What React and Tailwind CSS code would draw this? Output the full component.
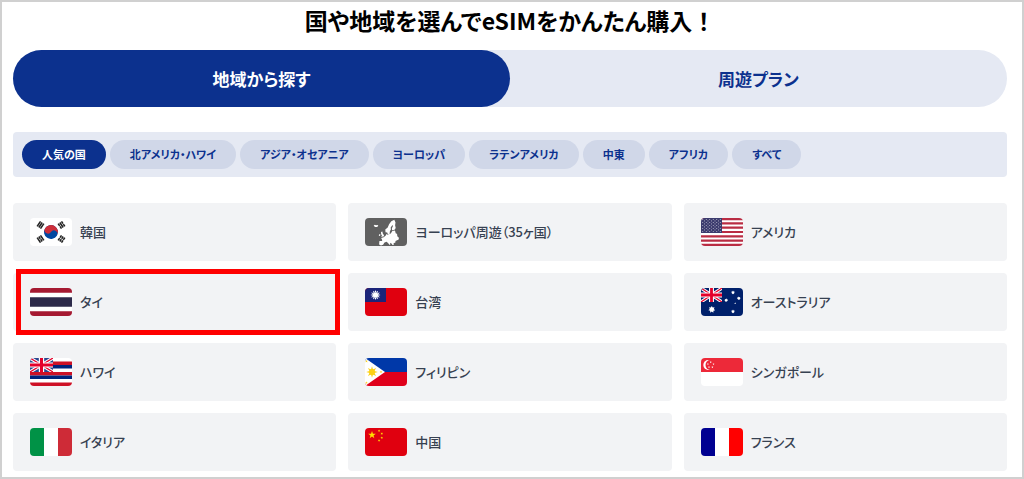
import React, { useState } from "react";

const starPoints = (cx, cy, r, n = 5, inner = 0.4, rot = -90) =>
  Array.from({ length: n * 2 }, (_, i) => {
    const rad = ((rot + (i * 180) / n) * Math.PI) / 180;
    const len = i % 2 ? r * inner : r;
    return `${(cx + len * Math.cos(rad)).toFixed(2)},${(cy + len * Math.sin(rad)).toFixed(2)}`;
  }).join(" ");

const Star = ({ x, y, r, n, inner, rot, fill = "#fff" }) => (
  <polygon points={starPoints(x, y, r, n, inner, rot)} fill={fill} />
);

function Union({ w, h, blue }) {
  return (
    <svg width={w} height={h} viewBox="0 0 60 40" preserveAspectRatio="none">
      <path d="M0 0h60v40H0z" fill={blue} />
      <path d="M0 0l60 40M60 0L0 40" stroke="#fff" strokeWidth="9" />
      <path d="M0 0l60 40M60 0L0 40" stroke="#e4002b" strokeWidth="3.5" />
      <path d="M30 0v40M0 20h60" stroke="#fff" strokeWidth="14" />
      <path d="M30 0v40M0 20h60" stroke="#e4002b" strokeWidth="8" />
    </svg>
  );
}

const Trigram = ({ x, y, a, split }) => (
  <g transform={`translate(${x} ${y}) rotate(${a})`} stroke="#222" strokeWidth="1.6">
    {[-2, 0, 2].map((dy, i) => (
      <path key={dy} d={split[i] ? `M-3 ${dy}h2.7M.3 ${dy}h2.7` : `M-3 ${dy}h6`} />
    ))}
  </g>
);

const flags = {
  kr: (
    <>
      <path d="M0 0h42v28H0z" fill="#fff" />
      <g transform="rotate(33 21 14)">
        <circle cx="21" cy="14" r="7" fill="#0047a0" />
        <path d="M14 14a7 7 0 0 1 14 0a3.5 3.5 0 0 0-7 0a3.5 3.5 0 0 1-7 0z" fill="#cd2e3a" />
      </g>
      <Trigram x={10.5} y={7} a={-56} split={[0, 0, 0]} />
      <Trigram x={31.5} y={7} a={56} split={[1, 0, 1]} />
      <Trigram x={10.5} y={21} a={56} split={[0, 1, 0]} />
      <Trigram x={31.5} y={21} a={-56} split={[1, 1, 1]} />
    </>
  ),
  eu: (
    <>
      <path d="M0 0h42v28H0z" fill="#606060" />
      <g fill="#fff">
        <path d="M8.7 7.4l1.2-.6 1.1.4 1.6-.3.7.9-1.2 1.1-1.8.2-.9-.7z" />
        <path d="M29.3 1.8l-3 1.4-2.2 3-1.4 3.3-2.4 1.9.2 2.8 1.7.3.8 1.9 1.6-.5.3-2.6 1-1.8-.2-2 1.6-2.2.8.4-1.2 2.6.2 1.9 2.5-.5 1.1-1.8-.6-2.6.4-2.8z" />
        <path d="M16 14l1.4-.5.3 1.8 1.4 2.2-.6 1.1-2.5.2 1-1.2-.9-1.3zM14 16.4l1.3-.5-.1 1.9-1.3.3z" />
        <path d="M30 12.5l-2.7.4-1.5 2.6-3.2 1.3-1.2-.8-.6 1.4-2.1 1.9-2.6.6.9 1.5.2 1.6-2.8.1-.3 3.3 1.9 1.2 2.1-.8 1.4-2.4 2.2-.6 2.2 2.2.6 1 .9-.8-.5-1.4 1.6.8 1 1.5 1.2-.2-.1-1.7 1.8-.6.1-1.6 3.2-1.4.2-1.9-1.6-1.4-.2-2.2-1.4-.8z" />
      </g>
    </>
  ),
  us: (
    <>
      <path d="M0 0h42v28H0z" fill="#fff" />
      {[0, 2, 4, 6, 8, 10, 12].map((i) => (
        <path key={i} d={`M0 ${((i + 0.5) * 28) / 13}h42`} stroke="#b92c43" strokeWidth="2.15" />
      ))}
      <path d="M0 0h21v15.1H0z" fill="#3c3b6e" />
      {Array.from({ length: 9 }, (_, r) =>
        Array.from({ length: r % 2 ? 5 : 6 }, (_, c) => (
          <Star key={`${r}-${c}`} x={(r % 2 ? 3.5 : 1.75) + c * 3.5} y={1.5 + r * 1.5} r={0.7} />
        ))
      )}
    </>
  ),
  th: (
    <>
      <path d="M0 0h42v28H0z" fill="#a51931" />
      <path d="M0 4.7h42v18.6H0z" fill="#fff" />
      <path d="M0 9.3h42v9.4H0z" fill="#2d2a4a" />
    </>
  ),
  tw: (
    <>
      <path d="M0 0h42v28H0z" fill="#e0000f" />
      <path d="M0 0h21v14H0z" fill="#1b2479" />
      <Star x={10.5} y={7} r={5} n={12} inner={0.6} />
      <circle cx="10.5" cy="7" r="3.1" fill="#1b2479" opacity=".5" />
      <circle cx="10.5" cy="7" r="2.6" fill="#fff" />
    </>
  ),
  au: (
    <>
      <path d="M0 0h42v28H0z" fill="#00206b" />
      <Union w={21} h={14} blue="#00206b" />
      <Star x={10.8} y={21.5} r={3.5} n={7} inner={0.6} />
      <Star x={32} y={23.5} r={1.9} n={7} inner={0.6} />
      <Star x={25.2} y={12.2} r={1.9} n={7} inner={0.6} />
      <Star x={32} y={4.5} r={1.9} n={7} inner={0.6} />
      <Star x={37.8} y={10.3} r={1.9} n={7} inner={0.6} />
      <Star x={34.2} y={15.3} r={1} />
    </>
  ),
  hi: (
    <>
      <path d="M0 0h42v28H0z" fill="#fff" />
      <path d="M0 3.5h42V7H0zM0 14h42v3.5H0zM0 24.5h42V28H0z" fill="#ce1126" />
      <path d="M0 7h42v3.5H0zM0 17.5h42V21H0z" fill="#00247d" />
      <Union w={23} h={14} blue="#2b478f" />
    </>
  ),
  ph: (
    <>
      <path d="M0 0h42v14H0z" fill="#0038a8" />
      <path d="M0 14h42v14H0z" fill="#e0001b" />
      <path d="M0 0l20 14L0 28z" fill="#fff" />
      <Star x={7} y={14} r={5.8} n={8} inner={0.45} fill="#fcd116" />
      <circle cx="7" cy="14" r="2.9" fill="#fcd116" />
      <Star x={1.5} y={3.3} r={1.4} fill="#fcd116" />
      <Star x={1.5} y={24.7} r={1.4} fill="#fcd116" />
      <Star x={16} y={14} r={1.4} fill="#fcd116" />
    </>
  ),
  sg: (
    <>
      <path d="M0 0h42v28H0z" fill="#fff" />
      <path d="M0 0h42v14H0z" fill="#ed2939" />
      <circle cx="7.2" cy="7" r="4.9" fill="#fff" />
      <circle cx="9.4" cy="7" r="4.9" fill="#ed2939" />
      {[[9.7, 4.2], [12.5, 6.1], [11.4, 9.2], [8, 9.2], [6.9, 6.1]].map(([x, y]) => (
        <Star key={x} x={x} y={y} r={1.1} />
      ))}
    </>
  ),
  it: (
    <>
      <path d="M0 0h14v28H0z" fill="#009246" />
      <path d="M14 0h14v28H14z" fill="#fff" />
      <path d="M28 0h14v28H28z" fill="#ce2b37" />
    </>
  ),
  cn: (
    <>
      <path d="M0 0h42v28H0z" fill="#e0000f" />
      <Star x={7} y={7} r={4} fill="#ffde00" />
      <Star x={14} y={2.8} r={1.4} rot={-60} fill="#ffde00" />
      <Star x={16.8} y={5.6} r={1.4} rot={-75} fill="#ffde00" />
      <Star x={16.8} y={9.8} r={1.4} fill="#ffde00" />
      <Star x={14} y={12.6} r={1.4} rot={-60} fill="#ffde00" />
    </>
  ),
  fr: (
    <>
      <path d="M0 0h14v28H0z" fill="#000091" />
      <path d="M14 0h14v28H14z" fill="#fff" />
      <path d="M28 0h14v28H28z" fill="#ff0000" />
    </>
  ),
};

const countries = [
  ["kr", "韓国"],
  ["eu", "ヨーロッパ周遊（35ヶ国）"],
  ["us", "アメリカ"],
  ["th", "タイ"],
  ["tw", "台湾"],
  ["au", "オーストラリア"],
  ["hi", "ハワイ"],
  ["ph", "フィリピン"],
  ["sg", "シンガポール"],
  ["it", "イタリア"],
  ["cn", "中国"],
  ["fr", "フランス"],
];

const regions = ["人気の国", "北アメリカ・ハワイ", "アジア・オセアニア", "ヨーロッパ", "ラテンアメリカ", "中東", "アフリカ", "すべて"];

const tabs = ["地域から探す", "周遊プラン"];

export default function App() {
  const [tab, setTab] = useState(0);
  const [region, setRegion] = useState(0);
  return (
    <main className="min-h-screen border-2 border-[#d0d0d0] bg-white pr-[15px] pb-1 pl-[11px] font-['Noto_Sans_CJK_JP',sans-serif] [font-feature-settings:'palt']">
      <h1 className="pt-1 text-center text-[23px] leading-7 font-bold text-black">
        国や地域を選んでeSIMをかんたん購入<span className="[font-feature-settings:normal]">！</span>
      </h1>
      <div className="mt-4 grid grid-cols-2 rounded-full bg-[#e5e9f3]">
        {tabs.map((t, i) => (
          <button
            key={t}
            type="button"
            onClick={() => setTab(i)}
            className={`h-[57px] rounded-full text-[17px] font-bold ${tab === i ? "bg-[#0c318e] text-white" : "text-[#0c318e]"}`}
          >
            {t}
          </button>
        ))}
      </div>
      <div className="mt-[25px] flex flex-wrap gap-1 rounded bg-[#e5e9f3] px-[9px] py-2">
        {regions.map((r, i) => (
          <button
            key={r}
            type="button"
            onClick={() => setRegion(i)}
            className={`h-[29px] rounded-full px-5 text-[11px] font-bold ${region === i ? "bg-[#0c318e] text-white" : "bg-[#d0d7e8] text-[#0c318e]"}`}
          >
            {r}
          </button>
        ))}
      </div>
      <ul className="mt-[26px] grid grid-cols-3 gap-3">
        {countries.map(([code, name]) => (
          <li key={code} className="relative">
            <a href={`#${code}`} className="flex h-[58px] items-center gap-2 rounded bg-[#f2f3f5] px-[17px] text-[13px] font-medium text-[#374151]">
              <svg viewBox="0 0 42 28" className="h-7 w-[42px] shrink-0 rounded" aria-hidden="true">
                {flags[code]}
              </svg>
              {name}
            </a>
            {code === "th" && (
              <span className="pointer-events-none absolute -top-1 -right-1 -bottom-1 left-[3px] border-5 border-[#ff0000]" />
            )}
          </li>
        ))}
      </ul>
    </main>
  );
}
